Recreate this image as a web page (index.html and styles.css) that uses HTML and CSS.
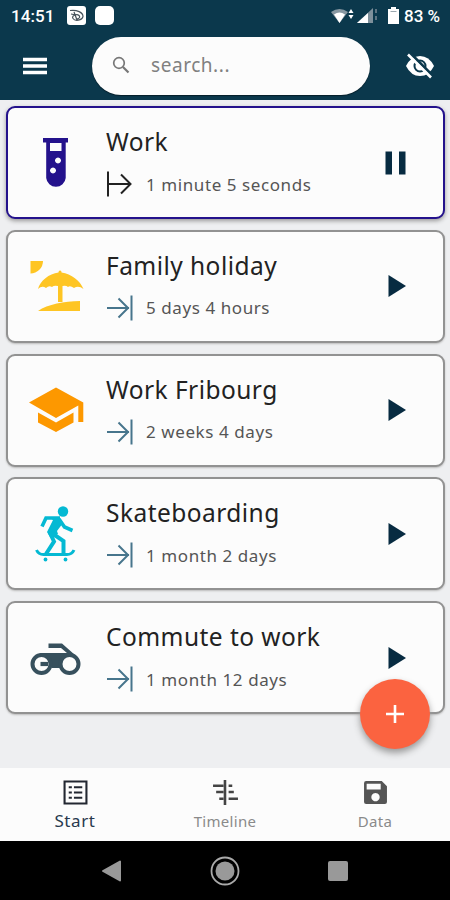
FILE: index.html
```html
<!DOCTYPE html>
<html lang="en">
<head>
<meta charset="utf-8">
<title>Start</title>
<link rel="stylesheet" href="styles.css">
</head>
<body>
<svg class="defs" aria-hidden="true">
  <symbol id="stopped" viewBox="0 0 28 26"><path d="M1 13h22M12.500 3.500l9.500 9.500-9.500 9.500M25.500 .5v25" fill="none" stroke="currentColor" stroke-width="2"/></symbol>
  <symbol id="play" viewBox="0 0 30 30"><path d="M7.500 4v22L25 15z" fill="#072b41"/></symbol>
</svg>
<header class="top">
  <div class="status">
    <span class="clock">14:51</span>
    <svg class="notes" width="50" height="22" viewBox="0 0 50 22">
      <rect x="0" y="1" width="19" height="19" rx="3" fill="#fff"/><rect x="28" y="1" width="19" height="19" rx="5" fill="#fff"/>
      <path d="M3 5.500c7-1 13 2 13 6-1 4-8 5-10 2s4-5 6-3-1 4-3 3M7 7l3 8M4 9l5 1" fill="none" stroke="#47535c" stroke-width="1.200"/>
    </svg>
    <svg class="signals" width="70" height="20" viewBox="0 0 70 20">
      <path d="M0 6q8.500-6 17 0L8.500 17z" fill="#8797a1"/><path d="M3 8.500q5.500-4 11 0L8.500 17z" fill="#fff"/>
      <path d="M17.500 7l2.500-4 2.500 4zM17.500 9l2.500 4 2.500-4z" fill="#fff"/>
      <path d="M26 17L42 2v15z" fill="#7e909b"/><path d="M26 17L37 7v10z" fill="#fff"/><path d="M45 3v4M45 10v4" stroke="#5d7482" stroke-width="2"/>
      <path d="M57 3h3V1h5v2h3v15H57z" fill="#fff"/><path d="M59.500 5.500h6" stroke="#9aa7af" stroke-width="1"/>
    </svg>
    <span class="percent">83 %</span>
  </div>
  <div class="bar">
    <svg class="menu" width="24" height="18" viewBox="0 0 24 18"><path d="M0 2.500h24M0 9h24M0 15.500h24" stroke="#fff" stroke-width="3.600"/></svg>
    <div class="search">
      <svg width="18" height="18" viewBox="0 0 18 18"><circle cx="7" cy="7" r="5.300" fill="none" stroke="#777" stroke-width="1.700"/><path d="M11 11l5.500 5.500" stroke="#777" stroke-width="2.200"/></svg>
      <span>search...</span>
    </div>
    <svg class="eye" width="30" height="26" viewBox="0 0 30 26">
      <path d="M1 13q5-10 14-10t14 10q-5 10-14 10T1 13z" fill="#fff"/><circle cx="15" cy="13" r="5.500" fill="#fff" stroke="#0b384c" stroke-width="2"/>
      <path d="M5 0l23 23" stroke="#0b384c" stroke-width="3"/><path d="M3 1.500l23 23" stroke="#fff" stroke-width="2.600"/>
    </svg>
  </div>
</header>
<main class="list">
  <article class="card active">
    <svg class="pic" viewBox="0 0 60 60"><path fill="#24128c" fill-rule="evenodd" d="M18 5h25v4.500h-2.300V45a9.800 9.800 0 0 1-19.500 0V9.500H18zM25 10v8h11.500v-8zM33 24.500a3 3 0 1 0 .01 0zM28 34.500a3 3 0 1 0 .01 0z"/></svg>
    <div class="text"><h2>Work</h2><p><svg class="arrow" viewBox="0 0 28 26"><path d="M2 .5v25M3 13h22M15 3.500l9.500 9.500-9.500 9.500" fill="none" stroke="#222" stroke-width="2"/></svg><span>1 minute 5 seconds</span></p></div>
    <svg class="act" viewBox="0 0 30 30"><path d="M4.500 3.500h6.500v23H4.500zM18 3.500h6.500v23H18z" fill="#072b41"/></svg>
  </article>
  <article class="card">
    <svg class="pic" viewBox="0 0 60 60"><path fill="#fec524" d="M5.500 5H18A12.500 12.500 0 0 1 5.500 17.500zM35 14.500c1.300 0 1.500 1 1.500 2 10 1.500 18.500 8 22 16.500q-5-4-9.500-1-4-3-6-1-2-2-5.500-1v16h-4.500V30q-4-1-6 1-3-2-6 1-4-3-8 1c2-8 11-15.500 20.500-16.500 0-1 .5-2 1.500-2zM13 55c10-7 26-9.500 42-10v10z"/></svg>
    <div class="text"><h2>Family holiday</h2><p><svg class="arrow"><use href="#stopped"/></svg><span>5 days 4 hours</span></p></div>
    <svg class="act"><use href="#play"/></svg>
  </article>
  <article class="card">
    <svg class="pic" viewBox="0 0 60 60"><path fill="#fd9800" d="M4 22.500L31 7.500l27.300 15V42h-5V25.500L31 38zM13 32.500l18 10 17.500-10v10L31 52 13 42.500z"/></svg>
    <div class="text"><h2>Work Fribourg</h2><p><svg class="arrow"><use href="#stopped"/></svg><span>2 weeks 4 days</span></p></div>
    <svg class="act"><use href="#play"/></svg>
  </article>
  <article class="card">
    <svg class="pic" viewBox="0 0 60 60" fill="none" stroke="#04b9d3"><circle cx="38" cy="7.500" r="5.200" fill="#04b9d3" stroke="none"/><path d="M17 22.500l4-8.500h14" stroke-width="3.600"/><path d="M34 15l5.500 8 8 3.500" stroke-width="3.600"/><path d="M24 13h10l4 6-6 8 1 3-8 3-3-5 6-12z" fill="#04b9d3" stroke="none"/><path d="M26 28.500l12.500 8.500v13M24.500 28l4.500 9.500L21 50" stroke-width="4"/><path d="M11.500 46q2 4.500 7 4.500H42q5 0 7-4.500" stroke-width="3"/><circle cx="20.500" cy="55.500" r="1.900" fill="#04b9d3" stroke="none"/><circle cx="40.500" cy="55.500" r="1.900" fill="#04b9d3" stroke="none"/></svg>
    <div class="text"><h2>Skateboarding</h2><p><svg class="arrow"><use href="#stopped"/></svg><span>1 month 2 days</span></p></div>
    <svg class="act"><use href="#play"/></svg>
  </article>
  <article class="card">
    <svg class="pic" viewBox="0 0 60 60"><path fill="#37505d" d="M14 25h28l-6-5H23.500v-4.500H37L50 27l-6 8-8 5H27l-6-11z"/><g fill="#fcfcfc" stroke="#37505d" stroke-width="4"><circle cx="16.500" cy="36" r="9"/><circle cx="44.500" cy="36" r="9"/></g><path d="M15.500 36H23" stroke="#37505d" stroke-width="4.200"/></svg>
    <div class="text"><h2>Commute to work</h2><p><svg class="arrow"><use href="#stopped"/></svg><span>1 month 12 days</span></p></div>
    <svg class="act"><use href="#play"/></svg>
  </article>
  <button class="fab" aria-label="Add"><svg width="20" height="20" viewBox="0 0 20 20"><path d="M1 10h18M10 1v18" stroke="#fff" stroke-width="2.600"/></svg></button>
</main>
<nav class="tabs">
  <div class="tab on"><svg viewBox="0 0 24 24"><path d="M1.500 1.500h21v21h-21z" fill="none" stroke="#222731" stroke-width="2"/><path d="M5.500 7h3M10.500 7h8M5.500 12h3M10.500 12h8M5.500 17h3M10.500 17h8" stroke="#222731" stroke-width="2"/></svg><span>Start</span></div>
  <div class="tab"><svg class="tl" viewBox="0 0 26 24"><path d="M12.500 0v24M1 5.500h10M4 11.500h7M7 18h4M16 5.500h3.500M16 11.500h5M16 18h9" stroke="#444" stroke-width="2.500"/></svg><span>Timeline</span></div>
  <div class="tab"><svg viewBox="0 0 24 24"><path fill="#555" fill-rule="evenodd" d="M3 1h15l5 5v15a2 2 0 0 1-2 2H3a2 2 0 0 1-2-2V3a2 2 0 0 1 2-2zM3.500 3.500v5.500h13.500V3.500zM12 12.500a4 4 0 1 0 .01 0z"/></svg><span>Data</span></div>
</nav>
<footer class="system">
  <svg width="22" height="24" viewBox="0 0 22 24"><path d="M2 12L19 2.500v19z" fill="#999" stroke="#999" stroke-width="2" stroke-linejoin="round"/></svg>
  <svg width="32" height="32" viewBox="0 0 32 32"><circle cx="16" cy="16" r="13.500" fill="none" stroke="#aaa" stroke-width="1.800"/><circle cx="16" cy="16" r="9.500" fill="#999"/></svg>
  <svg width="22" height="22" viewBox="0 0 22 22"><rect x="1" y="1" width="20" height="20" rx="2" fill="#999"/></svg>
</footer>
</body>
</html>
```
FILE: styles.css
```css
* { box-sizing: border-box; }
body { margin: 0; width: 450px; height: 900px; display: flex; flex-direction: column; overflow: hidden; background: #eeeff1; font-family: "Noto Sans", sans-serif; }
svg { display: block; flex: none; }
.defs { display: none; }
.top { height: 100px; flex: none; background: #0b384c; }
.status { height: 32px; display: flex; align-items: center; color: #fff; font: 500 17px/32px Roboto, sans-serif; padding-left: 11px; }
.clock { width: 56px; letter-spacing: .1px; }
.signals { margin-left: 214px; }
.percent { margin-left: 3px; white-space: nowrap; }
.bar { display: flex; align-items: center; height: 67px; padding-left: 23px; }
.search { width: 278px; height: 58px; margin-left: 45px; border-radius: 29px; background: #fcfcfc; display: flex; align-items: center; padding-left: 20px; gap: 21px; font-size: 19px; line-height: 26px; padding-bottom: 2px; letter-spacing: .55px; color: #808080; box-shadow: 0 1px 1px #051e2a; }
.eye { margin-left: 35px; }
.list { position: relative; height: 668px; flex: none; padding: 6px 5px 0 6px; display: flex; flex-direction: column; gap: 10.75px; }
.card { height: 113px; flex: none; border: 2px solid #929292; border-radius: 9px; background: #fcfcfc; display: flex; align-items: center; padding-left: 17px; box-shadow: 0 1px 2px #bbb; }
.card.active { border-color: #24128c; box-shadow: 0 2px 4px #999; }
.pic { width: 60px; height: 60px; }
.text { width: 275px; margin-left: 21px; }
h2 { margin: 2px 0 0; font-size: 24.5px; line-height: 38px; font-weight: 400; color: #222; white-space: nowrap; letter-spacing: .45px; }
p { margin: 3px 0 0; height: 40px; display: flex; align-items: center; color: #555; font-size: 17px; white-space: nowrap; letter-spacing: .58px; }
.arrow { width: 28px; height: 26px; margin-right: 12px; color: #47758c; }
.act { width: 30px; height: 30px; }
.fab { position: absolute; right: 20px; bottom: 19px; width: 70px; height: 70px; border: 0; border-radius: 50%; background: #fb6340; display: grid; place-items: center; box-shadow: 0 4px 7px #999; }
.tabs { height: 73px; flex: none; background: #fcfcfc; display: grid; grid-template-columns: repeat(3, 1fr); }
.tab { display: flex; flex-direction: column; align-items: center; padding-top: 12px; font-size: 15px; line-height: 24px; color: #8a8a8a; letter-spacing: .3px; }
.tab svg { width: 25px; height: 25px; margin-bottom: 4px; }
.tab .tl { width: 27px; }
.tab.on { color: #28394e; font-size: 17px; letter-spacing: .6px; }
.system { height: 59px; flex: none; background: #000; display: flex; justify-content: center; align-items: center; gap: 86px; }
```
